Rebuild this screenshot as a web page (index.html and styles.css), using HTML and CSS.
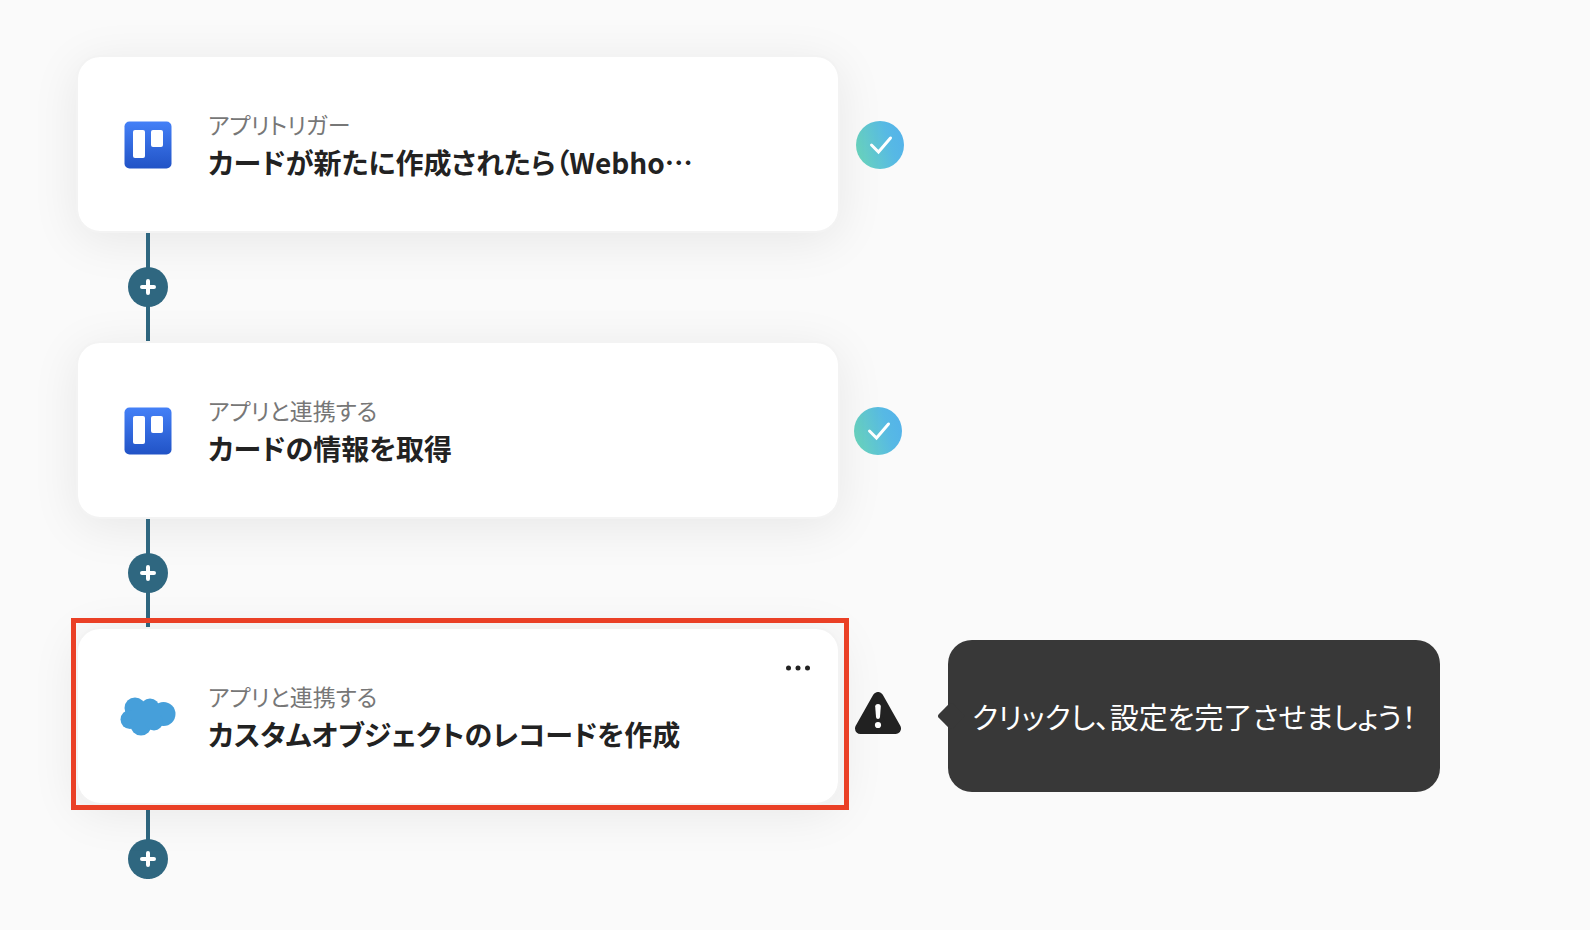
FILE: index.html
```html
<!DOCTYPE html>
<html lang="ja">
<head>
    <meta charset="UTF-8">
    <meta name="viewport" content="width=device-width, initial-scale=1.0">
    <title>フローボット</title>
    <link rel="stylesheet" href="styles.css">
</head>
<body>
    <!-- 共通アイコン -->
    <svg class="icon-defs" aria-hidden="true">
        <defs>
            <linearGradient id="trello-blue" x1="0" y1="0" x2="0" y2="1">
                <stop offset="0" stop-color="#4480f7"/>
                <stop offset="1" stop-color="#2153c6"/>
            </linearGradient>
            <linearGradient id="done-gradient" x1="0" y1="0.65" x2="1" y2="0.35">
                <stop offset="0" stop-color="#6ad5be"/>
                <stop offset="0.7" stop-color="#57b9e4"/>
                <stop offset="1" stop-color="#54b3ea"/>
            </linearGradient>
        </defs>
        <symbol id="icon-trello" viewBox="0 0 56 56">
            <rect x="4.500" y="4.500" width="47" height="47" rx="5" fill="url(#trello-blue)"/>
            <rect x="13" y="13" width="12" height="28" rx="2" fill="#fff"/>
            <rect x="31" y="13" width="12" height="17" rx="2" fill="#fff"/>
        </symbol>
        <symbol id="icon-salesforce" viewBox="0 1 56 56">
            <g fill="#469fda">
                <circle cx="15" cy="20" r="10.500"/>
                <circle cx="30" cy="20" r="9.500"/>
                <circle cx="43.500" cy="26" r="12"/>
                <circle cx="10" cy="31.500" r="9.500"/>
                <circle cx="21" cy="37" r="10.500"/>
                <circle cx="34" cy="33.500" r="9"/>
                <rect x="12" y="18" width="28" height="18"/>
            </g>
        </symbol>
        <symbol id="icon-done" viewBox="0 0 48 48">
            <circle cx="24" cy="24" r="24" fill="url(#done-gradient)"/>
            <path d="M15.500 24 L22.500 31 L34.500 17" fill="none" stroke="#fff" stroke-width="3" stroke-linecap="round"/>
        </symbol>
        <symbol id="icon-warning" viewBox="0 -1 48 48">
            <path d="M24 4.500 L41.500 35.500 H6.500 Z" fill="#222" stroke="#222" stroke-width="11" stroke-linejoin="round"/>
            <path d="M21.200 13.500 Q21.200 11 24 11 Q26.800 11 26.800 13.500 L26 24 Q25.800 26 24 26 Q22.200 26 22 24 Z" fill="#fff"/>
            <circle cx="24" cy="32" r="3.100" fill="#fff"/>
        </symbol>
        <symbol id="icon-plus" viewBox="0 0 16 16">
            <path d="M8 2 V14 M2 8 H14" stroke="#fff" stroke-width="4" stroke-linecap="round"/>
        </symbol>
    </svg>

    <main class="flow">
        <section class="step step-trigger">
            <article class="card">
                <svg class="app-icon"><use href="#icon-trello"/></svg>
                <div class="card-text">
                    <p class="card-label">アプリトリガー</p>
                    <h2 class="card-title">カードが新たに作成されたら（Webho…</h2>
                </div>
            </article>
            <svg class="status status-done" role="img" aria-label="設定済み"><use href="#icon-done"/></svg>
        </section>

        <div class="connector">
            <button class="add-button" type="button" aria-label="追加"><svg><use href="#icon-plus"/></svg></button>
        </div>

        <section class="step">
            <article class="card">
                <svg class="app-icon"><use href="#icon-trello"/></svg>
                <div class="card-text">
                    <p class="card-label">アプリと連携する</p>
                    <h2 class="card-title">カードの情報を取得</h2>
                </div>
            </article>
            <svg class="status status-done" role="img" aria-label="設定済み"><use href="#icon-done"/></svg>
        </section>

        <div class="connector">
            <button class="add-button" type="button" aria-label="追加"><svg><use href="#icon-plus"/></svg></button>
        </div>

        <section class="step">
            <article class="card card-selected">
                <svg class="app-icon"><use href="#icon-salesforce"/></svg>
                <div class="card-text">
                    <p class="card-label">アプリと連携する</p>
                    <h2 class="card-title">カスタムオブジェクトのレコードを作成</h2>
                </div>
                <button class="menu-button" type="button" aria-label="メニュー">
                    <svg viewBox="0 0 24 6"><circle cx="2.500" cy="3" r="2.500"/><circle cx="12" cy="3" r="2.500"/><circle cx="21.500" cy="3" r="2.500"/></svg>
                </button>
            </article>
            <svg class="status" role="img" aria-label="未設定"><use href="#icon-warning"/></svg>
            <p class="bubble">クリックし、設定を完了させましょう！</p>
        </section>

        <div class="connector connector-end">
            <button class="add-button" type="button" aria-label="追加"><svg><use href="#icon-plus"/></svg></button>
        </div>
    </main>
</body>
</html>
```

FILE: styles.css
```css
* {
    box-sizing: border-box;
}

body {
    margin: 0;
    background: #fafafa;
    color: #222;
    font-family: "Noto Sans CJK JP", sans-serif;
    font-feature-settings: "palt";
}

p, h2 {
    margin: 0;
}

button {
    padding: 0;
    border: none;
    cursor: pointer;
}

.icon-defs {
    position: absolute;
    width: 0;
    height: 0;
}

.flow {
    padding: 55px 76px 51px;
}

.step {
    display: flex;
    align-items: center;
    gap: 14px;
}

.step-trigger {
    gap: 16px;
}

/* カード */
.card {
    position: relative;
    display: flex;
    flex: 0 1 764px;
    align-items: center;
    gap: 32px;
    min-width: 0;
    min-height: 178px;
    padding: 2px 42px 0;
    background: #fff;
    background-clip: padding-box;
    border: 2px solid #f3f3f3;
    border-radius: 24px;
    box-shadow: 0 8px 48px rgba(0, 0, 0, 0.08);
}

.app-icon {
    flex: none;
    width: 56px;
    height: 56px;
}

.card-text {
    min-width: 0;
}

.card-label {
    color: #777;
    font-size: 23px;
    line-height: 34px;
}

.card-title {
    font-size: 28px;
    font-weight: 700;
    line-height: 42px;
}

/* 選択中の赤枠 */
.card-selected {
    z-index: 1;
}

.card-selected::after {
    content: "";
    position: absolute;
    inset: -11px -11px -7px -7px;
    border: 5px solid #ea4026;
    pointer-events: none;
}

.menu-button {
    position: absolute;
    top: 23px;
    right: 24px;
    display: flex;
    align-items: center;
    justify-content: center;
    width: 32px;
    height: 32px;
    background: none;
}

.menu-button svg {
    width: 24px;
    height: 6px;
    fill: #222;
}

.status {
    flex: none;
    width: 48px;
    height: 48px;
}

.status-done {
    margin-top: 2px;
}

/* ステップ間の線 */
.connector {
    position: relative;
    display: flex;
    align-items: center;
    justify-content: center;
    width: 40px;
    height: 108px;
    margin-left: 52px;
    background: linear-gradient(#2f6780, #2f6780) center / 4px 100% no-repeat;
}

.connector-end {
    align-items: flex-end;
    height: 74px;
}

.add-button {
    display: flex;
    align-items: center;
    justify-content: center;
    width: 40px;
    height: 40px;
    background: #2f6780;
    border-radius: 50%;
}

.add-button svg {
    width: 16px;
    height: 16px;
}

/* 吹き出し */
.bubble {
    position: relative;
    margin-left: 32px;
    padding: 55px 24px;
    background: #383838;
    border-radius: 24px;
    color: #fff;
    font-size: 29px;
    line-height: 42px;
}

.bubble::before {
    content: "";
    position: absolute;
    top: 50%;
    left: -7px;
    width: 20px;
    height: 20px;
    margin-top: -10px;
    background: #383838;
    border-radius: 3px;
    transform: rotate(45deg);
}
```
